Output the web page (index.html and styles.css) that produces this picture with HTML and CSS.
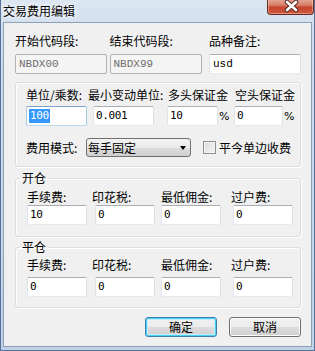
FILE: index.html
```html
<!DOCTYPE html>
<html>
<head>
<meta charset="utf-8">
<link rel="stylesheet" href="styles.css">
</head>
<body>
<div class="window">
  <div class="titlebar">
    <span class="title">交易费用编辑</span>
    <div class="close">
      <svg width="47" height="16" viewBox="0 0 47 16">
        <path d="M19 3 L28 11 M28 3 L19 11" stroke="#5a2a22" stroke-width="4.6" stroke-linecap="round"/>
        <path d="M19 3 L28 11 M28 3 L19 11" stroke="#ffffff" stroke-width="2.6" stroke-linecap="round"/>
      </svg>
    </div>
  </div>
  <div class="client">
    <div class="toprow">
      <div class="col c1"><div class="lbl">开始代码段:</div><div class="field disabled mono">NBDX00</div></div>
      <div class="col c2"><div class="lbl">结束代码段:</div><div class="field disabled mono">NBDX99</div></div>
      <div class="col c3"><div class="lbl">品种备注:</div><div class="field mono">usd</div></div>
    </div>

    <div class="group g1">
      <div class="lblrow">
        <span class="lbl w1">单位/乘数:</span><span class="lbl w2">最小变动单位:</span><span class="lbl w3">多头保证金</span><span class="lbl">空头保证金</span>
      </div>
      <div class="inrow">
        <div class="field focus num f1"><span class="sel">100</span></div>
        <div class="field num f2">0.001</div>
        <div class="field num f3">10</div><span class="pct">%</span>
        <div class="field num f4">0</div><span class="pct">%</span>
      </div>
      <div class="moderow">
        <span class="lbl mlabel">费用模式:</span>
        <div class="select"><span>每手固定</span><span class="arrow"></span></div>
        <span class="check"></span><span class="lbl">平今单边收费</span>
      </div>
    </div>

    <fieldset class="fs g2">
      <legend>开仓</legend>
      <div class="fgrid">
        <div class="cell k1"><div class="lbl">手续费:</div><div class="field num">10</div></div>
        <div class="cell k2"><div class="lbl">印花税:</div><div class="field num">0</div></div>
        <div class="cell k3"><div class="lbl">最低佣金:</div><div class="field num">0</div></div>
        <div class="cell k4"><div class="lbl">过户费:</div><div class="field num">0</div></div>
      </div>
    </fieldset>

    <fieldset class="fs g3">
      <legend>平仓</legend>
      <div class="fgrid">
        <div class="cell k1"><div class="lbl">手续费:</div><div class="field num">0</div></div>
        <div class="cell k2"><div class="lbl">印花税:</div><div class="field num">0</div></div>
        <div class="cell k3"><div class="lbl">最低佣金:</div><div class="field num">0</div></div>
        <div class="cell k4"><div class="lbl">过户费:</div><div class="field num">0</div></div>
      </div>
    </fieldset>

    <div class="buttons">
      <button class="btn default">确定</button>
      <button class="btn">取消</button>
    </div>
  </div>
</div>
</body>
</html>
```

FILE: styles.css
```css
* { box-sizing: border-box; }
html, body { margin: 0; padding: 0; }
body {
  width: 315px;
  height: 351px;
  overflow: hidden;
  font-family: "Noto Sans CJK SC", "Noto Sans", sans-serif;
  font-size: 12px;
  color: #000;
}
.window {
  width: 315px;
  height: 351px;
  background: linear-gradient(180deg, #dbe6f2 0%, #cfdcec 10%, #bfd2e8 100%);
  border-left: 1px solid #55739a;
  border-right: 1px solid #55739a;
  border-bottom: 1px solid #55739a;
}
.titlebar {
  height: 22px;
  display: flex;
  justify-content: space-between;
  align-items: flex-start;
}
.title {
  margin-left: 2px;
  margin-top: 4px;
  line-height: 14px;
  font-size: 12px;
  text-shadow: 0 0 4px #fff, 0 0 6px #fff;
}
.close {
  width: 47px;
  height: 16px;
  margin-top: -1px;
  border: 1px solid #6b2a1f;
  border-top: none;
  border-radius: 0 0 4px 4px;
  background: linear-gradient(180deg, #e9a899 0%, #d8806c 40%, #c6442c 55%, #cf5a3d 100%);
  box-shadow: inset 0 0 0 1px rgba(255,255,255,0.35);
}
.close svg { display: block; }

.client {
  margin-left: 2px;
  width: 309px;
  height: 325px;
  background: #f0f0f0;
  border: 1px solid #8d9fb6;
  padding: 11px 10px 0 11px;
}

.lbl {
  line-height: 14px;
  white-space: nowrap;
}

.toprow { display: flex; }
.col.c1 { width: 95px; }
.col.c2 { width: 100px; }
.col.c3 { width: 92px; }
.toprow .field { margin-top: 6px; width: 92px; }

.field {
  height: 20px;
  background: #fff;
  border: 1px solid;
  border-color: #abadb3 #dbdfe6 #e3e9ef #e2e3ea;
  border-radius: 2px;
  padding-left: 2px;
  line-height: 18px;
  font-size: 11px;
  white-space: nowrap;
  overflow: hidden;
}
.field.mono { font-family: "Liberation Mono", monospace; padding-left: 3px; }
.field.num { font-family: "DejaVu Sans Mono", monospace; letter-spacing: -0.4px; }
.field.disabled {
  background: #f4f4f4;
  border-color: #adb2b5;
  color: #6d6d6d;
}
.field.focus { border-color: #7da2ce #a4c9e3 #b7d9ed #a4c9e3; }
.sel {
  background: #3399ff;
  color: #fff;
  display: inline-block;
  line-height: 14px;
  padding: 0 1px;
}

.group {
  margin-top: 8px;
  width: 286px;
  border: 1px solid #d5dfe5;
  border-radius: 3px;
  box-shadow: inset 1px 1px 0 #fff, 1px 1px 0 #fff;
  padding: 5px 0 9px 10px;
}
.lblrow { display: flex; }
.lbl.w1 { width: 62px; }
.lbl.w2 { width: 80px; }
.lbl.w3 { width: 67px; }
.inrow { display: flex; align-items: center; margin-top: 4px; }
.f1 { width: 61px; }
.f2 { width: 61px; margin-left: 6px; }
.f3 { width: 51px; margin-left: 13px; }
.f4 { width: 49px; margin-left: 8px; }
.pct { width: 7px; margin-left: 1px; font-size: 11px; font-family: "DejaVu Sans", sans-serif; }

.moderow { display: flex; align-items: center; margin-top: 12px; }
.mlabel { width: 60px; }
.select {
  width: 105px;
  height: 19px;
  border: 1px solid #707070;
  border-radius: 3px;
  background: linear-gradient(180deg, #f2f2f2 0%, #ebebeb 50%, #dddddd 50%, #cfcfcf 100%);
  display: flex;
  align-items: center;
  justify-content: space-between;
  padding: 0 4px 0 1px;
  line-height: 14px;
}
.arrow {
  width: 0;
  height: 0;
  border-left: 3.5px solid transparent;
  border-right: 3.5px solid transparent;
  border-top: 4px solid #000;
}
.check {
  width: 13px;
  height: 13px;
  margin-left: 12px;
  margin-right: 3px;
  border: 1px solid #8f8f8f;
  background: linear-gradient(135deg, #dcdcdc 0%, #f5f5f5 100%);
  box-shadow: inset 0 0 0 1px #f4f4f4;
}

.fs {
  margin: 0;
  width: 286px;
  border: 1px solid #d5dfe5;
  border-radius: 3px;
  box-shadow: inset 1px 1px 0 #fff, 1px 1px 0 #fff;
  padding: 0;
  min-inline-size: 0;
}
.fs legend {
  margin-left: 4px;
  padding: 0 2px;
  line-height: 14px;
  font-size: 12px;
}
.g2 { margin-top: 4px; }
.g3 { margin-top: 3px; }
.fgrid {
  display: grid;
  grid-template-columns: 65px 69px 70px 1fr;
  padding: 5px 0 11px 11px;
}
.g3 .fgrid { padding: 4px 0 10px 11px; }
.cell .field { width: 60px; margin-top: 1px; }
.g3 .cell .field { margin-top: 5px; }
.k2 .field { margin-left: 3px; }
.k4 .field { margin-left: 2px; }

.buttons {
  display: flex;
  justify-content: flex-end;
  gap: 12px;
  margin-top: 9px;
  width: 286px;
}
.btn {
  width: 72px;
  height: 20px;
  margin: 0;
  padding: 0;
  font-family: "Noto Sans CJK SC", sans-serif;
  font-size: 12px;
  line-height: 14px;
  color: #000;
  border: 1px solid #707070;
  border-radius: 3px;
  background: linear-gradient(180deg, #f2f2f2 0%, #ebebeb 50%, #dddddd 50%, #cfcfcf 100%);
  box-shadow: inset 0 0 0 1px #fcfcfc;
}
.btn.default {
  border-color: #3c7fb1;
  box-shadow: inset 0 0 0 1px #48d1f5, inset 0 0 0 2px #c9ecf9;
}
```
